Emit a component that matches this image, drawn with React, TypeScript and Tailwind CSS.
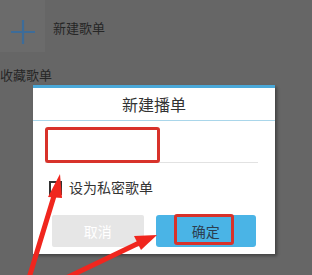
import React from "react";

const font = { fontFamily: '"Noto Sans CJK SC", "Noto Sans", sans-serif' };

export default function App() {
  return (
    <div className="relative h-[275px] w-[312px] overflow-hidden bg-[#666666]" style={font}>
      {/* background list */}
      <div className="flex">
        <div className="flex h-[52px] w-[45px] items-center justify-center bg-[#6b6b6b] pt-[12px]">
          <svg width="26" height="26" viewBox="0 0 26 26">
            <path d="M13 1v24M1 13h24" stroke="#3d6c99" strokeWidth="2.2" />
          </svg>
        </div>
        <p className="ml-[8px] mt-[18px] text-[13px] text-[#262626]">新建歌单</p>
      </div>
      <p className="mt-[16px] text-[13px] leading-none text-[#262626]">收藏歌单</p>

      {/* dialog */}
      <div className="absolute left-[33px] top-[85px] w-[242px] border-t-[3px] border-[#4aa8d8] bg-white shadow-[2px_2px_3px_rgba(0,0,0,0.35)]">
        <div className="flex h-[33px] items-center justify-center border-b border-[#a9d6ea] text-[16px] text-[#333]">
          新建播单
        </div>
        <div className="pl-[12px] pr-[17px] pt-[6px]">
          <div className="relative h-[36px] border-b border-[#e2e2e2]">
            <div className="absolute left-0 top-0 h-[36px] w-[115px] rounded-[3px] border-[3px] border-[#d8322a]" />
          </div>
          <label className="mt-[14px] flex items-center gap-[7px] pl-[4px] text-[14px] text-[#333]">
            <span className="h-[14px] w-[13px] border-2 border-[#333] bg-white" />
            设为私密歌单
          </label>
        </div>
        <div className="mt-[17px] flex gap-[12px] px-[19px] pb-[7px]">
          <button className="h-[32px] w-[96px] rounded-[2px] bg-[#e6e6e6] text-[14px] text-white">取消</button>
          <button className="relative h-[32px] w-[105px] rounded-[3px] bg-[#4ab4e6] text-[14px] text-[#2c3e50]">
            确定
            <span className="absolute left-[18px] top-[-1px] h-[31px] w-[60px] rounded-[3px] border-[3px] border-[#d8322a]" />
          </button>
        </div>
      </div>

      {/* annotation arrows */}
      <svg className="absolute left-0 top-0" width="312" height="275" viewBox="0 0 312 275">
        <path d="M29 278 L54 196" stroke="#f0261e" strokeWidth="5" strokeLinecap="round" />
        <polygon points="60,174 48,197 62,198" fill="#f0261e" />
        <path d="M66 278 L139 243" stroke="#f0261e" strokeWidth="5" strokeLinecap="round" />
        <polygon points="157,235 134,236 141,250" fill="#f0261e" />
      </svg>
    </div>
  );
}
